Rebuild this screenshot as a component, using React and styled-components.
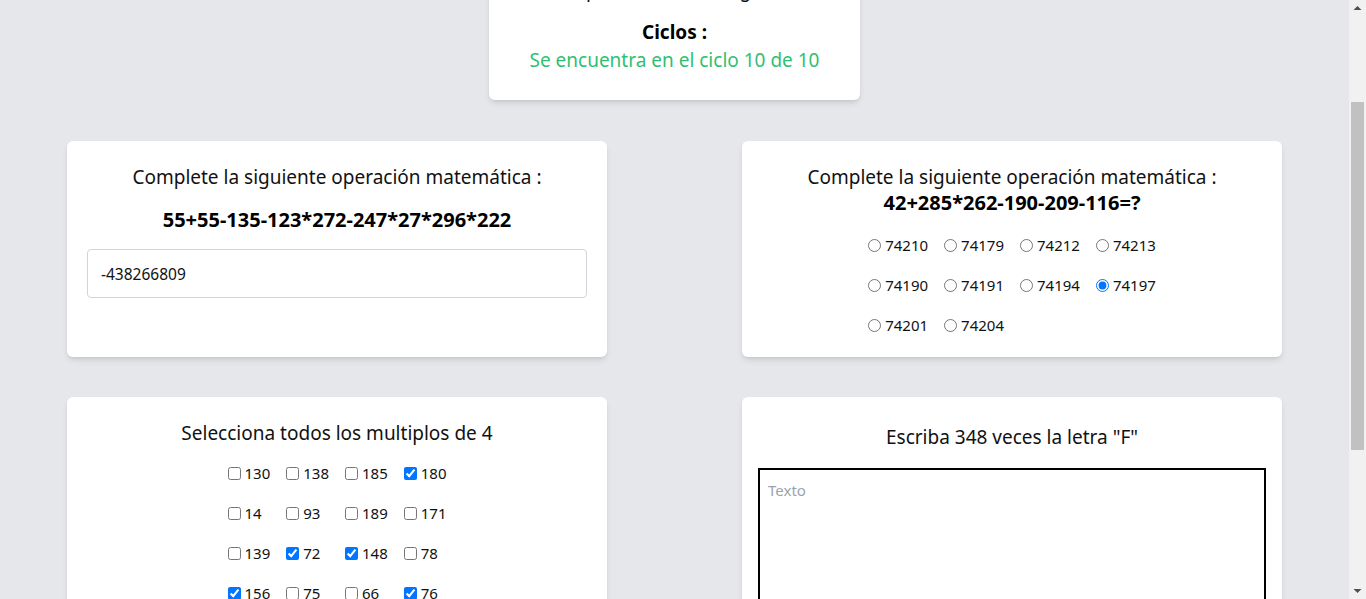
import React, { useEffect } from "react";
import styled, { createGlobalStyle } from "styled-components";

const GlobalStyle = createGlobalStyle`
  html { scroll-behavior: auto; scrollbar-width: none; }
  html::-webkit-scrollbar { display: none; }
  body {
    margin: 0;
    background: #e5e7eb;
    font-family: "Segoe UI", "Noto Sans", sans-serif;
    color: #111111;
  }
`;

const Page = styled.main`
  margin-right: 17px;
  padding: 70px 0 40px;
  display: flex;
  flex-direction: column;
  align-items: center;
`;

const ScrollTrack = styled.div`
  position: fixed;
  top: 0;
  right: 0;
  width: 17px;
  height: 100vh;
  background: #f1f1f1;
  display: flex;
  flex-direction: column;
  justify-content: space-between;
  align-items: center;
`;

const ScrollArrow = styled.svg`
  display: block;
  width: 17px;
  height: 17px;
`;

const ScrollThumb = styled.div`
  position: absolute;
  top: 102px;
  left: 2px;
  width: 13px;
  height: 348px;
  background: #c1c1c1;
`;

const StatusCard = styled.section`
  width: 371px;
  box-sizing: border-box;
  background: #ffffff;
  border-radius: 6px;
  box-shadow: 0 4px 6px -1px rgba(0, 0, 0, 0.1), 0 2px 4px -2px rgba(0, 0, 0, 0.1);
  padding: 24px 16px 26px;
  display: flex;
  flex-direction: column;
  align-items: center;
  gap: 14px;
  margin-bottom: 41px;
`;

const StatusBlock = styled.div`
  display: flex;
  flex-direction: column;
  align-items: center;
`;

const StatusLabel = styled.div`
  font-size: 19px;
  font-weight: 700;
  line-height: 28px;
  color: #000000;
`;

const StatusText = styled.div`
  font-size: 19px;
  line-height: 28px;
  color: ${(p) => p.$color || "#111111"};
`;

const Grid = styled.div`
  width: 1215px;
  display: grid;
  grid-template-columns: 540px 540px;
  column-gap: 135px;
  row-gap: 40px;
`;

const Card = styled.section`
  background: #ffffff;
  border-radius: 6px;
  box-shadow: 0 4px 6px -1px rgba(0, 0, 0, 0.1), 0 2px 4px -2px rgba(0, 0, 0, 0.1);
  padding: 24px ${(p) => p.$px || 16}px 20px;
  display: flex;
  flex-direction: column;
  align-items: stretch;
`;

const Title = styled.h2`
  margin: ${(p) => p.$mt || 0}px 0 0;
  font-size: 19px;
  font-weight: 400;
  line-height: 24px;
  text-align: center;
  color: #111111;
`;

const Expression = styled.div`
  margin-top: ${(p) => p.$mt || 0}px;
  font-size: 20px;
  font-weight: 700;
  line-height: 28px;
  text-align: center;
  color: #000000;
`;

const AnswerInput = styled.input`
  margin-top: 15px;
  height: 49px;
  box-sizing: border-box;
  border: 1px solid #d1d5db;
  border-radius: 4px;
  padding: 0 13px;
  font-family: inherit;
  font-size: 15.5px;
  color: #111111;
  outline: none;
`;

const OptionGrid = styled.div`
  margin-top: 16px;
  display: grid;
  grid-template-columns: repeat(4, max-content);
  justify-content: center;
  column-gap: 16px;
  row-gap: 16px;
`;

const Option = styled.label`
  display: flex;
  align-items: center;
  height: 24px;
  font-size: 15px;
  color: #111111;
`;

const Choice = styled.input`
  width: 13px;
  height: 13px;
  margin: 0 4px 0 0;
`;

const TextArea = styled.textarea`
  margin-top: 19px;
  height: 298px;
  box-sizing: border-box;
  border: 2px solid #000000;
  border-radius: 0;
  padding: 10px 8px;
  font-family: inherit;
  font-size: 15px;
  resize: none;
  outline: none;
  &::placeholder { color: #9ca3af; }
`;

const radios = [74210, 74179, 74212, 74213, 74190, 74191, 74194, 74197, 74201, 74204];
const checks = [
  [130, false], [138, false], [185, false], [180, true],
  [14, false], [93, false], [189, false], [171, false],
  [139, false], [72, true], [148, true], [78, false],
  [156, true], [75, false], [66, false], [76, true],
];

export default function App() {
  useEffect(() => {
    window.scrollTo(0, 146);
    const t = setTimeout(() => window.scrollTo(0, 146), 50);
    return () => clearTimeout(t);
  }, []);

  return (
    <>
      <GlobalStyle />
      <Page>
        <StatusCard>
          <StatusBlock>
            <StatusLabel>Tiempo :</StatusLabel>
            <StatusText>Tiempo restante 45 segundos</StatusText>
          </StatusBlock>
          <StatusBlock>
            <StatusLabel>Ciclos :</StatusLabel>
            <StatusText $color="#2fbf71">Se encuentra en el ciclo 10 de 10</StatusText>
          </StatusBlock>
        </StatusCard>
        <Grid>
          <Card $px={20}>
            <Title>Complete la siguiente operación matemática :</Title>
            <Expression $mt={17}>55+55-135-123*272-247*27*296*222</Expression>
            <AnswerInput defaultValue="-438266809" />
          </Card>
          <Card>
            <Title>Complete la siguiente operación matemática :</Title>
            <Expression>42+285*262-190-209-116=?</Expression>
            <OptionGrid>
              {radios.map((v) => (
                <Option key={v}>
                  <Choice type="radio" name="op" defaultChecked={v === 74197} />
                  {v}
                </Option>
              ))}
            </OptionGrid>
          </Card>
          <Card>
            <Title>Selecciona todos los multiplos de 4</Title>
            <OptionGrid>
              {checks.map(([v, c]) => (
                <Option key={v}>
                  <Choice type="checkbox" defaultChecked={c} />
                  {v}
                </Option>
              ))}
            </OptionGrid>
          </Card>
          <Card>
            <Title $mt={4}>Escriba 348 veces la letra "F"</Title>
            <TextArea placeholder="Texto" />
          </Card>
        </Grid>
      </Page>
      <ScrollTrack aria-hidden="true">
        <ScrollArrow viewBox="0 0 17 17">
          <path d="M4.5 10 L8.5 6 L12.5 10 Z" fill="#505050" />
        </ScrollArrow>
        <ScrollThumb />
        <ScrollArrow viewBox="0 0 17 17">
          <path d="M4.5 7 L8.5 11 L12.5 7 Z" fill="#505050" />
        </ScrollArrow>
      </ScrollTrack>
    </>
  );
}
